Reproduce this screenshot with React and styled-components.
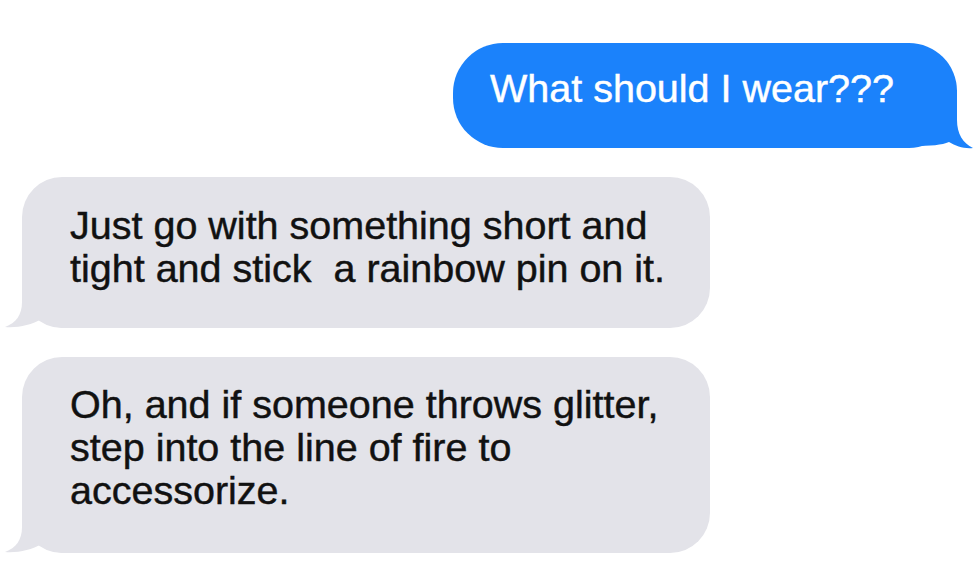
import React from "react";
import styled, { createGlobalStyle } from "styled-components";

const GlobalStyle = createGlobalStyle`
  html, body {
    margin: 0;
    padding: 0;
    background: #ffffff;
  }
  body {
    font-family: "Liberation Sans", Arial, sans-serif;
  }
`;

const messages = [
  { id: 1, fromMe: true, text: "What should I wear???" },
  {
    id: 2,
    fromMe: false,
    lines: ["Just go with something short and", "tight and stick\u00a0 a rainbow pin on it."],
  },
  {
    id: 3,
    fromMe: false,
    lines: ["Oh, and if someone throws glitter,", "step into the line of fire to", "accessorize."],
  },
];

const Tail = ({ fromMe }) =>
  fromMe ? (
    <TailSvg $fromMe viewBox="0 0 60 60" width="60" height="60">
      <path
        d="M0 0 L44 0 L44 30 C44 44 50 53 60 58 C51 59 43 56 36 52 C29 55 18 56 0 56 Z"
        fill="#1b82fb"
      />
    </TailSvg>
  ) : (
    <TailSvg viewBox="0 0 66 60" width="66" height="60">
      <path
        d="M66 0 L22 0 L22 32 C22 45 16 53 5 57 C18 58 31 55 42 49 C48 54 56 58 66 58 Z"
        fill="#e3e3e9"
      />
    </TailSvg>
  );

const App = () => {
  return (
    <>
      <GlobalStyle />
      <Thread>
        {messages.map((m) => (
          <Bubble key={m.id} $fromMe={m.fromMe}>
            {m.fromMe ? m.text : m.lines.map((l, i) => <Line key={i}>{l}</Line>)}
            <Tail fromMe={m.fromMe} />
          </Bubble>
        ))}
      </Thread>
    </>
  );
};

export default App;

const Thread = styled.div`
  display: flex;
  flex-direction: column;
  gap: 29px;
  padding: 43px 23px 0 22px;
  width: 980px;
  box-sizing: border-box;
`;

const Bubble = styled.div`
  position: relative;
  box-sizing: border-box;
  font-size: 39.5px;
  line-height: 43px;
  align-self: ${(p) => (p.$fromMe ? "flex-end" : "flex-start")};
  width: ${(p) => (p.$fromMe ? "504px" : "688px")};
  padding: ${(p) => (p.$fromMe ? "24px 20px 38px 37px" : "27px 20px 38px 48px")};
  border-radius: ${(p) => (p.$fromMe ? "50px 48px 48px 50px" : "40px")};
  background: ${(p) => (p.$fromMe ? "#1b82fb" : "#e3e3e9")};
  color: ${(p) => (p.$fromMe ? "#ffffff" : "#111111")};
  -webkit-text-stroke: 0.45px ${(p) => (p.$fromMe ? "#ffffff" : "#111111")};
  &:last-child {
    padding-bottom: 41px;
    padding-top: 26px;
  }
`;

const Line = styled.div`
  white-space: nowrap;
`;

const TailSvg = styled.svg`
  position: absolute;
  bottom: -2px;
  ${(p) => (p.$fromMe ? "right: -16px;" : "left: -22px;")}
  display: block;
`;
